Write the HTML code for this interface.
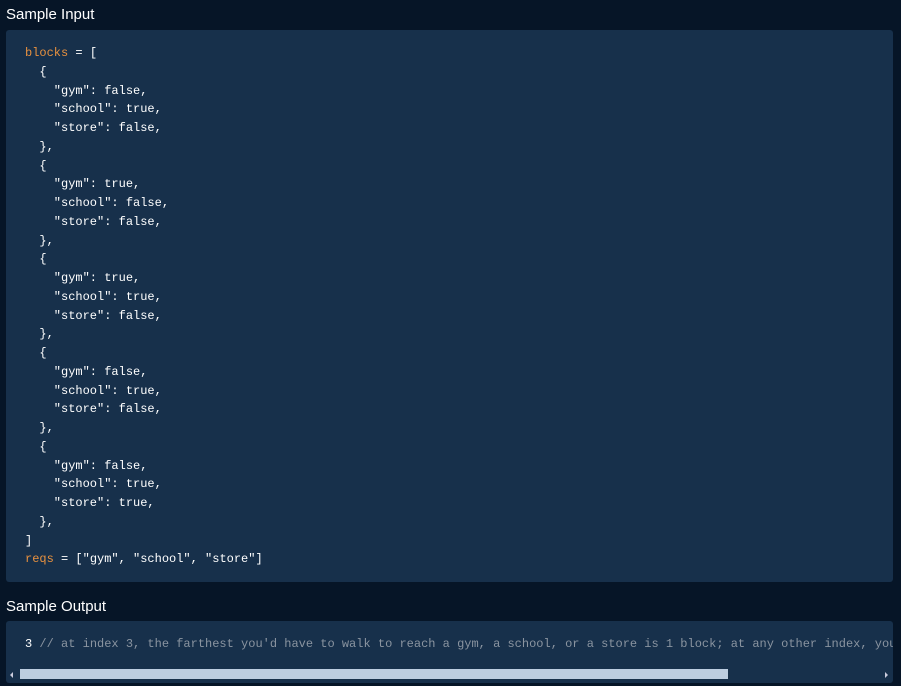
<!DOCTYPE html>
<html><head><style>
body{margin:0;width:901px;height:686px;background:#061527;overflow:hidden;font-family:"Liberation Sans",sans-serif;position:relative}
.t{position:absolute;left:6px;color:#fff;font-size:15px}
.p{position:absolute;left:6px;width:887px;background:#17304b;border-radius:3px;overflow:hidden}
pre{margin:0;font-family:"Liberation Mono",monospace;font-size:12px;line-height:18.75px;color:#fff;position:absolute;left:19px;white-space:pre}
.o{color:#e8913f}.c{color:#8a94a0}
</style></head><body>
<div class="t" style="top:6px">Sample Input</div>
<div class="p" style="top:30px;height:552px">
<pre style="top:14px"><span class="o">blocks</span> = [
  {
    "gym": false,
    "school": true,
    "store": false,
  },
  {
    "gym": true,
    "school": false,
    "store": false,
  },
  {
    "gym": true,
    "school": true,
    "store": false,
  },
  {
    "gym": false,
    "school": true,
    "store": false,
  },
  {
    "gym": false,
    "school": true,
    "store": true,
  },
]
<span class="o">reqs</span> = ["gym", "school", "store"]</pre>
</div>
<div class="t" style="top:598px">Sample Output</div>
<div class="p" style="top:621px;height:62px">
<pre style="top:14px">3 <span class="c">// at index 3, the farthest you'd have to walk to reach a gym, a school, or a store is 1 block; at any other index, you'd have to walk farther</span></pre>
<div style="position:absolute;left:4px;top:51px;width:0;height:0;border-top:3px solid transparent;border-bottom:3px solid transparent;border-right:3px solid #ccd"></div>
<div style="position:absolute;left:14px;top:48px;width:708px;height:10px;background:#bccde0"></div>
<div style="position:absolute;left:879px;top:51px;width:0;height:0;border-top:3px solid transparent;border-bottom:3px solid transparent;border-left:3px solid #ccd"></div>
</div>
</body></html>
